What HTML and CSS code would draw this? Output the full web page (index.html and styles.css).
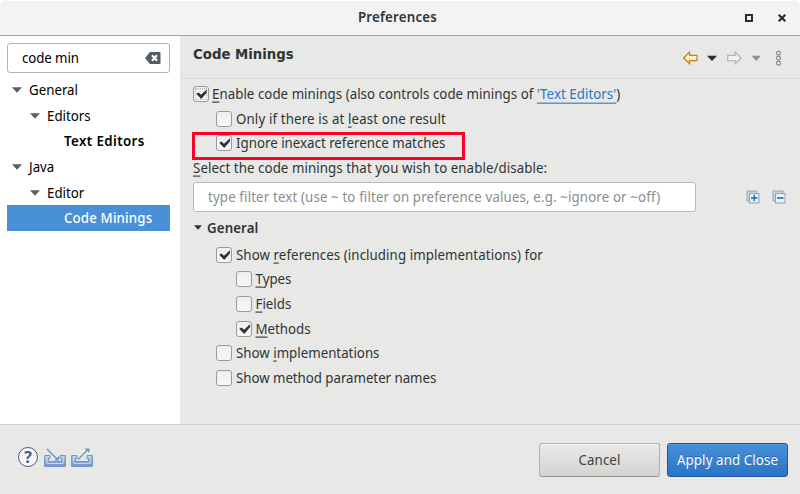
FILE: index.html
```html
<!DOCTYPE html>
<html lang="en">
<head>
<meta charset="utf-8">
<title>Preferences</title>
<link rel="stylesheet" href="styles.css">
</head>
<body>
<svg width="0" height="0" class="defs">
  <defs>
    <linearGradient id="tray" x1="0" y1="0" x2="0" y2="1"><stop offset="0" stop-color="#bacbe3"/><stop offset="1" stop-color="#6c91c7"/></linearGradient>
    <linearGradient id="gold" x1="0" y1="0" x2="0" y2="1"><stop offset="0" stop-color="#fffdf0"/><stop offset="1" stop-color="#ffe08a"/></linearGradient>
    <symbol id="tick" viewBox="0 0 16 16"><path d="M3.200 7.800 5.600 6.500 8 8.800 14 3.300V6.300L8.200 13Z" fill="#2a3134"/></symbol>
    <symbol id="tri" viewBox="0 0 10 6"><path d="M0 .3H10L5 5.8Z" fill="currentColor"/></symbol>
  </defs>
</svg>
<div class="window">
  <header class="titlebar">
    <h1>Preferences</h1>
    <div class="controls">
      <svg width="10" height="10" viewBox="0 0 10 10"><rect x="2" y="2" width="6" height="6" fill="none" stroke="#262d30" stroke-width="2"/></svg>
      <svg width="10" height="10" viewBox="0 0 10 10"><path d="M1.7 1.7 8.3 8.3M8.3 1.7 1.7 8.3" stroke="#262d30" stroke-width="2.2"/></svg>
    </div>
  </header>
  <main>
    <aside>
      <div class="search"><span class="t-code">code min</span>
        <svg width="16" height="12" viewBox="0 0 16 12"><path d="M5 0H14.5Q15.5 0 15.5 1V11Q15.5 12 14.5 12H5L0 6Z" fill="#555c5f"/><path d="M7 3.3 12 8.7M12 3.3 7 8.7" stroke="#fff" stroke-width="2.1"/></svg>
      </div>
      <ul class="tree">
        <li><svg class="tri"><use href="#tri"/></svg><span>General</span></li>
        <li class="l2"><svg class="tri"><use href="#tri"/></svg><span>Editors</span></li>
        <li class="l3 bold"><span class="t-ted">Text Editors</span></li>
        <li><svg class="tri"><use href="#tri"/></svg><span>Java</span></li>
        <li class="l2"><svg class="tri"><use href="#tri"/></svg><span>Editor</span></li>
        <li class="l3 selected"><span class="t-cm">Code Minings</span></li>
      </ul>
    </aside>
    <section class="page">
      <div class="page-head">
        <h2>Code Minings</h2>
        <div class="nav">
          <svg width="98" height="16" viewBox="0 0 98 16">
            <path d="M.7 8 6.5 2.3V5.3H14V10.7H6.5V13.7Z" fill="url(#gold)" stroke="#bd8420" stroke-width="1.2"/>
            <path d="M24 5.8H34L29 11Z" fill="#262d30"/>
            <path d="M58 8 52.2 2.3V5.3H44.7V10.7H52.2V13.7Z" fill="#f1f1f1" stroke="#b4b4b4" stroke-width="1.2"/>
            <path d="M68.500 5.800H78L73.300 11Z" fill="#8d9192"/>
            <g fill="#f2f2f2" stroke="#777a7b" stroke-width="1.1"><circle cx="95.500" cy="3.200" r="1.900"/><circle cx="95.500" cy="8.200" r="1.900"/><circle cx="95.500" cy="13.200" r="1.900"/></g>
          </svg>
        </div>
      </div>
      <div class="options">
        <label class="row focus"><i class="box"><svg><use href="#tick"/></svg></i><span class="t-en"><u>E</u>nable code minings (also controls code minings of <a>'Text Editors'</a>)</span></label>
        <label class="row in1"><i class="box"></i><span class="t-only">Only if there is at <u>l</u>east one result</span></label>
        <label class="row in1 marked"><i class="box"><svg><use href="#tick"/></svg></i><span>Ignore inexact reference matches</span></label>
        <div class="row"><span class="t-sel"><u>S</u>elect the code minings that you wish to enable/disable:</span></div>
      </div>
      <div class="filter-line">
        <div class="filter"><span class="t-fil">type filter text (use ~ to filter on preference values, e.g. ~ignore or ~off)</span></div>
        <div class="tools">
          <svg width="14" height="14" viewBox="0 0 14 14"><path d="M1 11V1H11V3.500H3.500V11Z" fill="#cbd5dc" stroke="#8fa5ba"/><rect x="3.500" y="3.500" width="9.500" height="9.500" fill="#e6f4fa" stroke="#8ca3c0"/><path d="M5 8H11.500M8.250 4.800V11.300" stroke="#1d629d" stroke-width="1.300"/></svg>
          <svg width="14" height="14" viewBox="0 0 14 14"><path d="M1 11V1H11V3.500H3.500V11Z" fill="#cbd5dc" stroke="#8fa5ba"/><rect x="3.500" y="3.500" width="9.500" height="9.500" fill="#e6f4fa" stroke="#8ca3c0"/><path d="M5 8H11.500" stroke="#1d629d" stroke-width="1.300"/></svg>
        </div>
      </div>
      <div class="group"><svg class="tri"><use href="#tri"/></svg><span class="t-grp">General</span></div>
      <div class="options lower">
        <label class="row in1"><i class="box"><svg><use href="#tick"/></svg></i><span class="t-ref">Show <u>r</u>eferences (including implementations) for</span></label>
        <label class="row in2"><i class="box"></i><span class="t-sub"><u>T</u>ypes</span></label>
        <label class="row in2"><i class="box"></i><span class="t-sub"><u>F</u>ields</span></label>
        <label class="row in2"><i class="box"><svg><use href="#tick"/></svg></i><span class="t-sub"><u>M</u>ethods</span></label>
        <label class="row in1"><i class="box"></i><span>Show <u>i</u>mplementations</span></label>
        <label class="row in1"><i class="box"></i><span class="t-par">Show method parameter names</span></label>
      </div>
    </section>
  </main>
  <footer>
    <div class="foot-icons">
      <div class="help">?</div>
      <svg width="22" height="19" viewBox="0 0 22 19"><path d="M.6 7.500H6V10.500H4.500V13.500H17.500V10.500H16V7.500H21.400V18.400H.6Z" fill="url(#tray)" stroke="#7594c5"/><path d="M5 8.800H2.800V15.500H19.200V8.800H17" fill="none" stroke="#d5e0f0" stroke-width=".8"/><path d="M3 1 13 11" stroke="#609dc2" stroke-width="1.500"/><path d="M15 8V12.500H10Z" fill="#609dc2"/></svg>
      <svg width="22" height="19" viewBox="0 0 22 19"><path d="M.6 7.500H6V10.500H4.500V13.500H17.500V10.500H16V7.500H21.400V18.400H.6Z" fill="url(#tray)" stroke="#7594c5"/><path d="M5 8.800H2.800V15.500H19.200V8.800H17" fill="none" stroke="#d5e0f0" stroke-width=".8"/><path d="M7 11.500 17 1.500" stroke="#609dc2" stroke-width="1.500"/><path d="M13.500 .5H18.500V5Z" fill="#609dc2"/></svg>
    </div>
    <div class="buttons">
      <button><span class="t-can">Cancel</span></button>
      <button class="primary"><span class="t-app">Apply and Close</span></button>
    </div>
  </footer>
</div>
</body>
</html>
```

FILE: styles.css
```css
*, *::after { box-sizing: border-box; }
html { background: #fff; }
body { margin: 0; font: 13.3px/20px "Noto Sans", sans-serif; color: #2e3436; }
h1, h2, ul { margin: 0; padding: 0; }
.defs { display: block; position: absolute; }
svg { display: block; flex: none; }
span { display: inline-block; transform: scaleY(1.08); }
.window { width: 800px; height: 494px; display: flex; flex-direction: column; background: #e8e8e6; border-radius: 7px 7px 0 0; overflow: hidden; white-space: nowrap; }
.titlebar { height: 36px; flex: none; background: #f3f3f3; border-bottom: 1px solid #a5a5a1; border-top: 1px solid #fff; display: grid; grid-template-columns: 1fr auto 1fr; align-items: center; }
h1 { grid-column: 2; font-size: 13.3px; font-weight: 600; letter-spacing: .2px; padding-right: 5px; transform: translateY(-1px) scaleY(1.05); }
.controls { display: flex; gap: 23px; justify-content: flex-end; padding-right: 13px; }
main { display: flex; height: 388px; flex: none; }
aside { width: 180px; background: #fff; padding: 7px 10px 0 7px; color: #000; }
.search { height: 30px; border: 1px solid #b2b3b1; border-radius: 3px; display: flex; align-items: center; justify-content: space-between; padding: 0 8px 0 14px; }
.tree { list-style: none; padding-top: 4.500px; }
.tree li { height: 25.600px; display: flex; align-items: center; gap: 7px; padding-left: 5px; }
.tree .l2 { padding-left: 23px; }
.tree .l3 { padding-left: 57px; }
.tri { width: 10px; height: 6px; color: #5b5e5f; }
.bold { font-weight: 600; }
.selected { background: #4a90d9; color: #fff; font-weight: 500; }
.page { flex: 1; padding-left: 13px; }
.page-head { height: 43px; margin-left: -12px; padding: 0 19px 6px 12px; border-bottom: 1px solid #d9d9d7; display: flex; justify-content: space-between; align-items: center; }
h2 { font: bold 13.300px/20px "DejaVu Sans", sans-serif; padding-top: 2px; }
.nav { padding-top: 8px; }
.options { padding-top: 3px; }
.row { height: 24.600px; display: flex; align-items: center; gap: 4px; position: relative; }
.in1 { padding-left: 23px; }
.in2 { padding-left: 43px; }
.box { width: 16px; height: 16px; flex: none; border: 1px solid #9a9b98; border-radius: 3px; background: linear-gradient(#eee, #f8f8f8); }
.box svg { width: 16px; height: 16px; margin: -1px; }
.focus { gap: 3px; }
.focus .box { outline: 1px dotted #b5b7b5; outline-offset: -3px; }
u { text-underline-offset: 2px; }
a { color: #2a76c6; text-decoration: underline; text-underline-offset: 3px; }
.marked::after { content: ""; position: absolute; left: -1px; top: 1px; width: 273px; height: 28px; border: 3px solid #fb0024; }
.filter-line { display: flex; align-items: center; padding: 2px 14px 0 0; justify-content: space-between; }
.filter { width: 503px; height: 30px; border: 1px solid #b8b8b5; border-radius: 3px; background: #fff; padding: 4px 14px; color: #8a8d8d; }
.tools { display: flex; gap: 12px; }
.group { display: flex; align-items: center; gap: 5px; height: 31px; font-weight: 600; }
.group .tri { width: 8px; height: 5px; color: #2e3436; margin-left: 1px; }
.lower { padding-top: 0; margin-top: -.8px; }
.t-code { letter-spacing: -.1px; }
.t-ted { letter-spacing: .4px; }
.t-cm { letter-spacing: .13px; }
.t-en { letter-spacing: .035px; }
.t-only { letter-spacing: .13px; }
.t-sel { letter-spacing: .065px; }
.t-fil { letter-spacing: .13px; }
.t-ref { letter-spacing: .07px; }
.t-par { letter-spacing: -.04px; }
.t-grp { letter-spacing: .1px; }
.t-sub { margin-left: -.5px; }
.t-app, .t-can { letter-spacing: .1px; }
footer { height: 70px; border-top: 1px solid #d0d0cd; display: flex; justify-content: space-between; align-items: flex-start; padding: 18px 12px 0 18px; }
.foot-icons { display: flex; gap: 5px; align-items: center; padding-top: 4px; }
.help { width: 20px; height: 20px; margin-right: 1px; border: 1px solid #4a5978; border-radius: 50%; background: #f5f7f9; color: #4a5c82; font-weight: bold; font-size: 16px; line-height: 18px; text-align: center; }
.buttons { display: flex; gap: 7px; }
button { width: 121px; height: 34px; padding: 0; border: 1px solid #b0b0ad; border-bottom-color: #949492; border-radius: 3px; background: linear-gradient(#e9e9e8, #d3d3d1); box-shadow: inset 0 1px #f7f7f6; font: inherit; color: #3c4346; }
.primary { border-color: #1d5799; background: linear-gradient(#4a90d9, #2874c7); box-shadow: inset 0 1px #4c98e0; color: #fff; text-shadow: 0 -1px rgba(0,0,0,.3); }
```
